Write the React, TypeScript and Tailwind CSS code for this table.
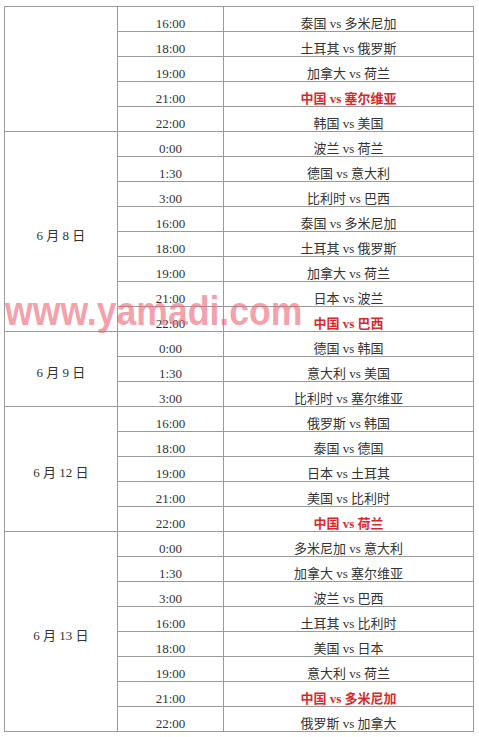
type Match = { time: string; game: string; hot?: boolean };
type Group = { date: string; rows: Match[] };

const groups: Group[] = [
  {
    date: "",
    rows: [
      { time: "16:00", game: "泰国 vs 多米尼加" },
      { time: "18:00", game: "土耳其 vs 俄罗斯" },
      { time: "19:00", game: "加拿大 vs 荷兰" },
      { time: "21:00", game: "中国 vs 塞尔维亚", hot: true },
      { time: "22:00", game: "韩国 vs 美国" },
    ],
  },
  {
    date: "6 月 8 日",
    rows: [
      { time: "0:00", game: "波兰 vs 荷兰" },
      { time: "1:30", game: "德国 vs 意大利" },
      { time: "3:00", game: "比利时 vs 巴西" },
      { time: "16:00", game: "泰国 vs 多米尼加" },
      { time: "18:00", game: "土耳其 vs 俄罗斯" },
      { time: "19:00", game: "加拿大 vs 荷兰" },
      { time: "21:00", game: "日本 vs 波兰" },
      { time: "22:00", game: "中国 vs 巴西", hot: true },
    ],
  },
  {
    date: "6 月 9 日",
    rows: [
      { time: "0:00", game: "德国 vs 韩国" },
      { time: "1:30", game: "意大利 vs 美国" },
      { time: "3:00", game: "比利时 vs 塞尔维亚" },
    ],
  },
  {
    date: "6 月 12 日",
    rows: [
      { time: "16:00", game: "俄罗斯 vs 韩国" },
      { time: "18:00", game: "泰国 vs 德国" },
      { time: "19:00", game: "日本 vs 土耳其" },
      { time: "21:00", game: "美国 vs 比利时" },
      { time: "22:00", game: "中国 vs 荷兰", hot: true },
    ],
  },
  {
    date: "6 月 13 日",
    rows: [
      { time: "0:00", game: "多米尼加 vs 意大利" },
      { time: "1:30", game: "加拿大 vs 塞尔维亚" },
      { time: "3:00", game: "波兰 vs 巴西" },
      { time: "16:00", game: "土耳其 vs 比利时" },
      { time: "18:00", game: "美国 vs 日本" },
      { time: "19:00", game: "意大利 vs 荷兰" },
      { time: "21:00", game: "中国 vs 多米尼加", hot: true },
      { time: "22:00", game: "俄罗斯 vs 加拿大" },
    ],
  },
];

export default function App() {
  return (
    <div className="relative min-h-screen w-[479px] bg-white pt-[6px] pl-[4px] font-['Liberation_Serif','Noto_Sans_CJK_SC',serif] text-[13px] text-[#333]">
      {/* Schedule table */}
      <div className="w-[470px] border-x border-b border-[#9a9a9a]">
        {groups.map((g, gi) => (
          <div key={gi} className="flex border-t border-[#9a9a9a]">
            <div className="flex w-[113px] items-center justify-center border-r border-[#9a9a9a] pt-2">
              {g.date}
            </div>
            <div className="flex flex-col">
              {g.rows.map((r, ri) => (
                <div
                  key={ri}
                  className={
                    ri === 0
                      ? "flex h-[24px]"
                      : "flex h-[25px] border-t border-[#9a9a9a]"
                  }
                >
                  <div className="flex w-[106px] items-center justify-center border-r border-[#9a9a9a] pt-2 leading-none">
                    {r.time}
                  </div>
                  <div
                    className={
                      r.hot
                        ? "flex w-[249px] items-center justify-center pt-2 leading-none font-bold text-[#d42a2e]"
                        : "flex w-[249px] items-center justify-center pt-2 leading-none"
                    }
                  >
                    {r.game}
                  </div>
                </div>
              ))}
            </div>
          </div>
        ))}
      </div>

      {/* Watermark */}
      <div className="pointer-events-none absolute left-[5px] top-[291px] origin-left scale-x-[0.89] font-['Liberation_Sans',sans-serif] text-[40px] leading-[40px] font-bold text-[rgba(236,100,115,0.62)]">
        www.yamadi.com
      </div>
    </div>
  );
}
